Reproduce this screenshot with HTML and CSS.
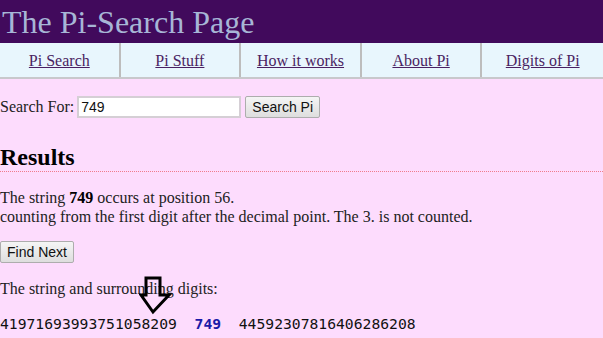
FILE: index.html
```html
<!DOCTYPE html>
<html lang="en">
<head>
    <meta charset="UTF-8">
    <title>The Pi-Search Page</title>
    <link rel="stylesheet" href="styles.css">
</head>
<body>
    <header class="top">
        <h1>The Pi-Search Page</h1>
    </header>

    <nav class="menu">
        <a href="#">Pi Search</a>
        <a href="#">Pi Stuff</a>
        <a href="#">How it works</a>
        <a href="#">About Pi</a>
        <a href="#">Digits of Pi</a>
    </nav>

    <form class="search">
        <label for="q">Search For:</label>
        <input type="text" id="q" value="749">
        <button type="button">Search Pi</button>
    </form>

    <h2 class="results">Results</h2>

    <p class="found">
        The string <b>749</b> occurs at position 56.<br>
        counting from the first digit after the decimal point. The 3. is not counted.
    </p>

    <button type="button" class="next">Find Next</button>

    <div class="around">
        <p>The string and surrounding digits:</p>
        <!-- flecha sobre el resultado -->
        <svg class="arrow" width="34" height="40" viewBox="0 0 34 40">
            <path d="M7 2 H21 V19 H30 L14 36 L2 19 H7 Z" fill="none" stroke="#000" stroke-width="3" stroke-linejoin="miter"/>
        </svg>
        <div class="digits">41971693993751058209&nbsp;&nbsp;<span class="hit">749</span>&nbsp;&nbsp;44592307816406286208</div>
    </div>
</body>
</html>
```

FILE: styles.css
```css
* {
    margin: 0;
    padding: 0;
    box-sizing: border-box;
}

body {
    background-color: #fddcfd;
    color: #222;
    font-family: 'Liberation Serif', 'Times New Roman', serif;
    font-size: 16px;
}

.top {
    background-color: #410a5c;
    height: 43px;
    padding: 4px 0 0 2px;
}

.top h1 {
    color: #a7b6d6;
    font-size: 32px;
    font-weight: normal;
    line-height: 36px;
}

.menu {
    display: grid;
    grid-template-columns: repeat(5, 1fr);
    background-color: #e8f6fd;
    border-bottom: 2px solid #c8c8cc;
    height: 36px;
}

.menu a {
    display: flex;
    align-items: center;
    justify-content: center;
    color: #4a1f62;
    border-right: 2px solid #bdbdbd;
    padding-top: 1px;
}

.menu a:last-child {
    border-right: none;
}

.search {
    display: flex;
    align-items: center;
    margin-top: 17px;
}

.search label {
    margin-right: 3px;
}

.search input {
    width: 164px;
    height: 22px;
    border: 2px solid #d5cfd5;
    background: white;
    font-family: Arial, 'Liberation Sans', sans-serif;
    font-size: 14px;
    padding: 0 2px;
    color: #111;
}

.search button,
.next {
    height: 22px;
    padding: 0 6px;
    border: 1px solid #adadad;
    border-radius: 2px;
    background: linear-gradient(#f5f5f5, #dedede);
    font-family: Arial, 'Liberation Sans', sans-serif;
    font-size: 14px;
    color: #111;
}

.search button {
    margin-left: 4px;
    width: 75px;
}

.results {
    font-size: 24px;
    line-height: 28px;
    margin-top: 25px;
    border-bottom: 1px dotted #f07c8c;
    color: #000;
}

.found {
    margin-top: 16px;
    line-height: 19px;
}

.found b {
    color: #000;
}

.next {
    margin-top: 15px;
    width: 74px;
}

.around {
    position: relative;
    margin-top: 17px;
}

.arrow {
    position: absolute;
    left: 139px;
    top: -4px;
}

.digits {
    margin-top: 17px;
    font-family: 'DejaVu Sans Mono', Consolas, monospace;
    font-size: 14.7px;
    color: #111;
}

.digits .hit {
    color: #1a1aa8;
    font-weight: bold;
}
```
